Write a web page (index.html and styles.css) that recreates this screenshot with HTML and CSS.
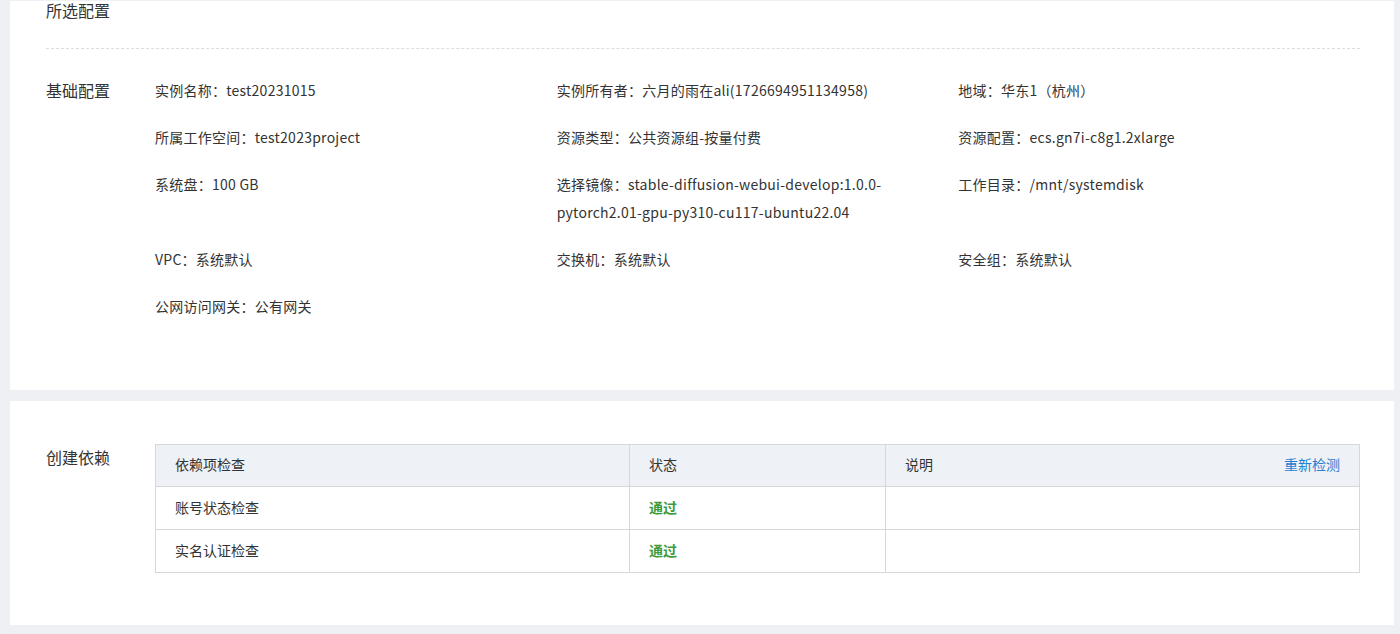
FILE: index.html
```html
<!DOCTYPE html>
<html lang="zh-CN">
<head>
  <meta charset="UTF-8">
  <meta name="viewport" content="width=device-width, initial-scale=1.0">
  <title>所选配置</title>
  <link rel="stylesheet" href="styles.css">
</head>
<body>

  <div class="card summary-card">
    <div class="card-title">所选配置</div>

    <div class="section">
      <div class="section-label">基础配置</div>
      <div class="info-grid">
        <div class="info-item">实例名称：test20231015</div>
        <div class="info-item">实例所有者：六月的雨在ali(1726694951134958)</div>
        <div class="info-item">地域：华东1（杭州）</div>

        <div class="info-item">所属工作空间：test2023project</div>
        <div class="info-item">资源类型：公共资源组-按量付费</div>
        <div class="info-item">资源配置：ecs.gn7i-c8g1.2xlarge</div>

        <div class="info-item">系统盘：100 GB</div>
        <div class="info-item">选择镜像：stable-diffusion-webui-develop:1.0.0-pytorch2.01-gpu-py310-cu117-ubuntu22.04</div>
        <div class="info-item">工作目录：/mnt/systemdisk</div>

        <div class="info-item">VPC：系统默认</div>
        <div class="info-item">交换机：系统默认</div>
        <div class="info-item">安全组：系统默认</div>

        <div class="info-item">公网访问网关：公有网关</div>
      </div>
    </div>
  </div>

  <div class="card deps-card">
    <div class="section">
      <div class="section-label deps-label">创建依赖</div>
      <table class="deps-table">
        <thead>
          <tr>
            <th class="col-name">依赖项检查</th>
            <th class="col-status">状态</th>
            <th class="col-desc">说明 <a href="#" class="recheck">重新检测</a></th>
          </tr>
        </thead>
        <tbody>
          <tr>
            <td>账号状态检查</td>
            <td class="status-pass">通过</td>
            <td></td>
          </tr>
          <tr>
            <td>实名认证检查</td>
            <td class="status-pass">通过</td>
            <td></td>
          </tr>
        </tbody>
      </table>
    </div>
  </div>

</body>
</html>
```

FILE: styles.css
```css
* {
  margin: 0;
  padding: 0;
  box-sizing: border-box;
}

body {
  font-family: "Noto Sans CJK SC", "Noto Sans", sans-serif;
  background-color: #eff0f3;
  color: #333;
  font-size: 14px;
  padding: 1px 6px 0 10px;
  height: 634px;
  overflow: hidden;
}

.card {
  background-color: #fff;
  padding-left: 36px;
  padding-right: 34px;
}

.summary-card {
  height: 389px;
}

.card-title {
  font-size: 16px;
  line-height: 18px;
  color: #333;
  padding-bottom: 29px;
  border-bottom: 1px dashed #dcdde0;
}

.section {
  display: flex;
  align-items: flex-start;
}

.summary-card .section {
  padding-top: 27px;
}

.section-label {
  width: 109px;
  flex-shrink: 0;
  font-size: 16px;
  line-height: 28px;
  color: #333;
}

.info-grid {
  flex: 1;
  display: grid;
  grid-template-columns: repeat(3, 1fr);
  row-gap: 19px;
}

.info-item {
  line-height: 28px;
  padding-right: 70px;
  letter-spacing: 0.25px;
}

.deps-card {
  margin-top: 11px;
  height: 224px;
  padding-top: 43px;
}

.deps-label {
  line-height: 24px;
  padding-top: 1px;
}

.deps-table {
  flex: 1;
  border-collapse: collapse;
  table-layout: fixed;
  border: 1px solid #d5d7db;
}

.deps-table th,
.deps-table td {
  border: 1px solid #d5d7db;
  text-align: left;
  font-weight: normal;
  padding: 0 19px 3px;
  height: 43px;
  font-size: 14px;
}

.deps-table th {
  background-color: #eef1f6;
  height: 42px;
}

.col-name {
  width: 474px;
}

.col-status {
  width: 256px;
}

.recheck {
  float: right;
  color: #1f7fd1;
  text-decoration: none;
}

.deps-table td.status-pass {
  color: #3f9b3a;
  font-weight: bold;
}
```
